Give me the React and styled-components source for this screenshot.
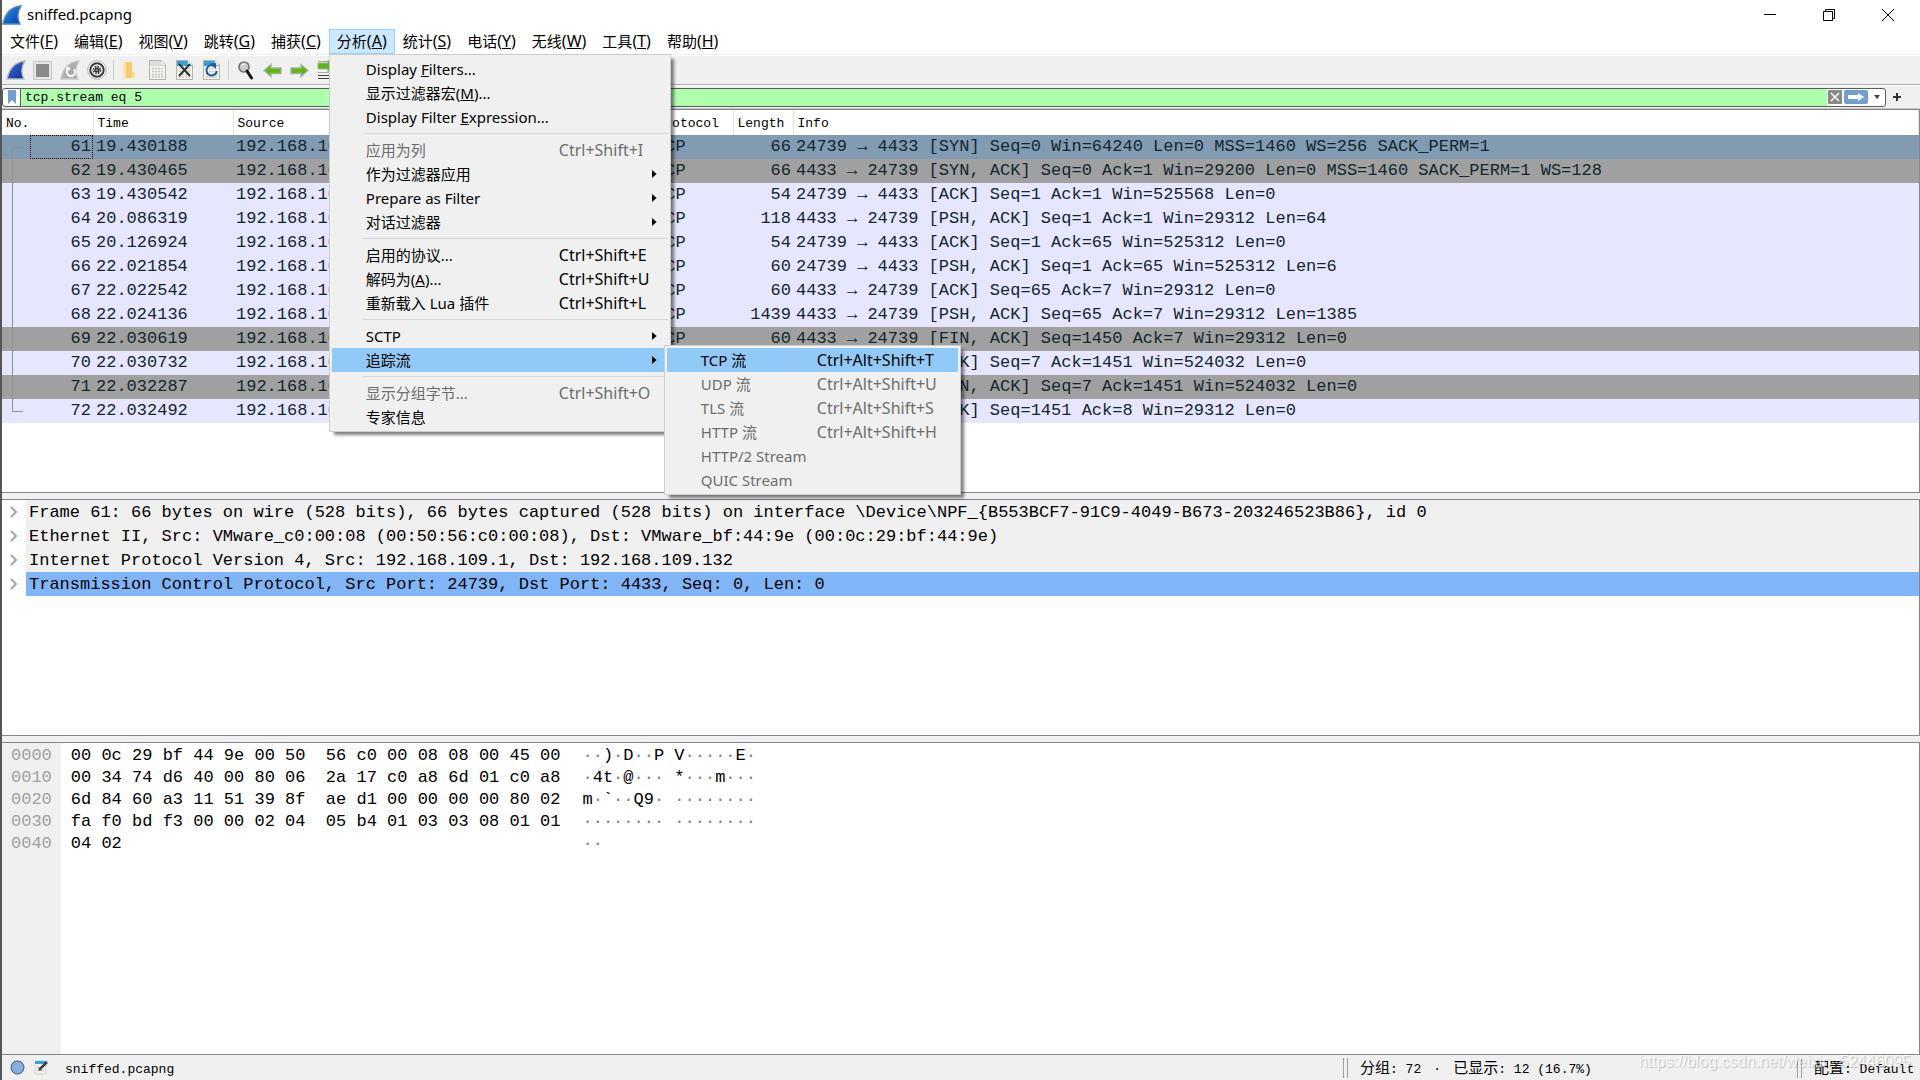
import React from 'react';
import styled, { createGlobalStyle, css } from 'styled-components';

const MONO = "'Liberation Mono', 'Noto Sans CJK SC', monospace";
const UI = "'Noto Sans', 'Noto Sans CJK SC', sans-serif";

const GlobalStyle = createGlobalStyle`
  * {
    box-sizing: border-box;
  }
  body {
    margin: 0;
    background: #fff;
    color: #000;
    font-family: ${UI};
    font-size: 15px;
  }
  button {
    margin: 0;
    padding: 0;
    border: 0;
    background: none;
    color: inherit;
    font: inherit;
  }
  ul {
    margin: 0;
    padding: 0;
    list-style: none;
  }
`;

const Window = styled.div`
  display: flex;
  flex-direction: column;
  height: 100vh;
  overflow: hidden;
  border-left: 2px solid #555;
  background: #f0f0f0;
`;

/* title bar */
const TitleBar = styled.header`
  display: flex;
  align-items: center;
  flex: none;
  height: 29px;
  padding-right: 3px;
  background: #fff;
`;
const Title = styled.h1`
  flex: 1;
  margin: 0 0 0 5px;
  font-size: 15px;
  font-weight: 400;
  line-height: 29px;
`;
const WindowButton = styled.button`
  display: grid;
  place-items: center;
  width: 59px;
  height: 29px;
`;

/* menus */
const MenuBar = styled.ul`
  display: flex;
  flex: none;
  height: 27px;
  padding-bottom: 2px;
  background: linear-gradient(#f0f0f0, #f0f0f0) 0 25px / 100% 1px no-repeat #fff;
`;
const MenuBarItem = styled.li`
  position: relative;
`;
const MenuBarButton = styled.button`
  height: 25px;
  padding: 0 7px;
  border: 1px solid ${p => (p.$open ? '#99d1ff' : 'transparent')};
  background: ${p => (p.$open ? '#cce8ff' : 'none')};
  line-height: 23px;
  white-space: nowrap;
`;
const Mnemonic = styled.span`
  font-size: 16px;
`;
const Menu = styled.ul`
  position: absolute;
  z-index: 2;
  width: ${p => p.$width}px;
  padding: 2px;
  border: 1px solid #ccc;
  background: #f0f0f0;
  box-shadow: 4px 4px 3px -1px rgba(0, 0, 0, 0.5);
  ${p =>
    p.$sub
      ? css`
          top: -3px;
          left: 332px;
        `
      : css`
          top: 25px;
          left: 0;
        `}
`;
const MenuRow = styled.li`
  position: relative;
`;
const MenuButton = styled.button`
  display: grid;
  grid-template-columns: ${p => (p.$sub ? '116px' : '193px')} 1fr 16px;
  align-items: center;
  width: 100%;
  height: 24px;
  padding-left: 34px;
  background: ${p => (p.$active ? '#91c9f7' : 'none')};
  color: ${p => (p.$muted ? '#6d6d6d' : '#000')};
  line-height: 24px;
  text-align: left;
  white-space: nowrap;
`;
const Shortcut = styled.span`
  font-size: 16px;
`;
const MenuSeparator = styled.li`
  height: 1px;
  margin: 4px 0 4px 30px;
  background: #d7d7d7;
`;

/* toolbar */
const ToolBar = styled.div`
  display: flex;
  align-items: center;
  flex: none;
  height: 29px;
  border-bottom: 1px solid #b0b0b0;
`;
const ToolButton = styled.button`
  display: grid;
  place-items: center;
  width: 27px;
  height: 28px;
`;
const ToolSeparator = styled.span`
  width: 1px;
  height: 20px;
  margin: 0 3px;
  background: #cfcfcf;
`;

/* display filter */
const FilterBar = styled.form`
  display: flex;
  align-items: center;
  flex: none;
  height: 24px;
  padding-right: 12px;
  border-top: 1px solid #fff;
  border-bottom: 1px solid #c3c3c6;
`;
const FilterBox = styled.div`
  display: flex;
  align-items: center;
  flex: 1;
  height: 19px;
  border: 1px solid #5b5b5b;
  border-radius: 3px;
  background: #fff;
`;
const BookmarkButton = styled.button`
  display: grid;
  place-items: center;
  width: 18px;
  height: 17px;
  border-right: 1px solid #5b5b5b;
`;
const FilterInput = styled.input`
  flex: 1;
  min-width: 0;
  height: 17px;
  padding: 1px 4px 0;
  border: 0;
  outline: 0;
  background: #afffaf;
  font: 13px/16px ${MONO};
`;
const FilterButton = styled.button`
  display: grid;
  place-items: center;
  width: ${p => p.$width}px;
  height: 17px;
`;

/* panes */
const Pane = styled.section`
  flex: ${p => p.$grow} 1 0;
  min-height: 0;
  overflow: hidden;
  border: 1px solid #828790;
  border-left: 0;
  background: #fff;
`;
const Splitter = styled.div`
  flex: none;
  height: 6px;
`;

const PacketPane = styled(Pane)`
  position: relative;
`;
const PacketTable = styled.table`
  width: 100%;
  border-collapse: collapse;
  table-layout: fixed;
`;
const HeadCell = styled.th`
  height: 25px;
  padding: 2px 4px 0;
  border-right: 1px solid #e5e5e5;
  font: 13px/23px ${MONO};
  text-align: left;
`;
const rowColors = {
  selected: '#819bb3',
  gray: '#a0a0a0',
  tcp: '#e7e6ff'
};
const PacketRow = styled.tr`
  background: ${p => rowColors[p.$kind]};
`;
const Cell = styled.td`
  height: 24px;
  padding: 0 2px 0 3px;
  overflow: hidden;
  color: #12272e;
  font: 17px/24px ${MONO};
  text-align: ${p => (p.$right ? 'right' : 'left')};
  white-space: pre;
`;
const FocusBox = styled.span`
  display: block;
  height: 24px;
  margin: 0 -2px 0 25px;
  padding-right: 2px;
  outline: ${p => (p.$on ? '1px dotted #000' : '0')};
  outline-offset: -1px;
`;
const Bracket = styled.svg`
  position: absolute;
  top: 37px;
  left: 9px;
`;

const TreeItem = styled.li`
  display: flex;
  height: 24px;
  font: 17px/26px ${MONO};
  white-space: pre;
`;
const TreeToggle = styled.button`
  display: grid;
  place-items: center;
  width: 24px;
  height: 24px;
`;
const TreeText = styled.span`
  flex: 1;
  padding-left: 3px;
  background: ${p => (p.$selected ? '#80b5f8' : '#f0f0f0')};
`;

const HexPane = styled(Pane)`
  display: flex;
  font: 17px/22px ${MONO};
`;
const HexColumn = styled.pre`
  margin: 0;
  padding: ${p => (p.$offset ? '2px 9px 0' : '2px 12px 0 10px')};
  background: ${p => (p.$offset ? '#f0f0f0' : '#fff')};
  color: ${p => (p.$offset ? '#a0a0a0' : '#000')};
  font: inherit;
`;
const Dot = styled.span`
  color: #808080;
`;

/* status bar */
const StatusBar = styled.footer`
  position: relative;
  display: flex;
  align-items: center;
  flex: none;
  height: 25px;
  padding: 4px 4px 0 3px;
  font: 13px/20px ${MONO};
  white-space: pre;
`;
const StatusButton = styled.button`
  display: grid;
  place-items: center;
  width: 24px;
  height: 20px;
  margin-top: -4px;
`;
const StatusFile = styled.span`
  flex: 1;
  padding-left: 12px;
`;
const StatusCell = styled.span`
  width: ${p => p.$width}px;
  padding-left: 12px;
`;
const Grip = styled.span`
  width: 5px;
  height: 20px;
  margin-top: -4px;
  border: solid #a0a0a0;
  border-width: 0 1px;
`;
const Cjk = styled.span`
  font-size: 15px;
`;
const Middot = styled.span`
  display: inline-block;
  width: 32px;
  text-align: center;
`;
const Watermark = styled.span`
  position: absolute;
  right: 9px;
  bottom: 8px;
  color: rgba(255, 255, 255, 0.75);
  font: 16px/20px 'Liberation Sans', sans-serif;
  text-shadow: 1px 1px 1px rgba(0, 0, 0, 0.2);
`;

function Fin({ size = 20, from = '#3f6fd6', to = '#10309a', edge = '#bdbdbd', children }) {
  const id = `fin${from.slice(1)}`;
  return (
    <svg width={size} height={size} viewBox="0 0 20 20">
      <defs>
        <linearGradient id={id} x1="0" y1="0" x2="1" y2="1">
          <stop offset="0" stopColor={from} />
          <stop offset="1" stopColor={to} />
        </linearGradient>
      </defs>
      <path
        d="M1 19C3 9 8 2 19 1C15 7 15 13 18 19Z"
        fill={`url(#${id})`}
        stroke={edge}
        strokeWidth="1.4"
      />
      {children}
    </svg>
  );
}

function FileIcon({ muted, children }) {
  return (
    <svg width="17" height="20" viewBox="0 0 17 20">
      <path d="M.5.5H12L16.500 5V19.500H.5Z" fill="#f4f4ee" stroke="#b5b5ae" />
      <path d="M1 1H12V5H16V6H1Z" fill={muted ? '#dedede' : '#38a0d8'} />
      <path d="M12 .5V5H16.500Z" fill="#fff" stroke="#c5c5c5" strokeWidth=".6" />
      <path
        d="M3 8.500H14M3 11.500H14M3 14.500H14M3 17H14"
        stroke={muted ? '#c4c4c4' : '#cfcfc5'}
        strokeWidth="1.500"
        strokeDasharray="2 1"
      />
      {children}
    </svg>
  );
}

function GreenArrow({ flip }) {
  return (
    <svg width="19" height="15" viewBox="0 0 19 15">
      <path
        transform={flip ? 'translate(19 0) scale(-1 1)' : undefined}
        d="M1 7.500L8 1.500V5H18V10.500H8V13.500Z"
        fill="#5cb512"
        stroke="#a5b59b"
        strokeWidth="1.300"
      />
    </svg>
  );
}

const tools = [
  ['Start capture', <Fin />],
  [
    'Stop capture',
    <svg width="19" height="19" viewBox="0 0 19 19">
      <path d="M.5.5H18.500V18.500H.5Z" fill="#e6e6e6" stroke="#c6c6c6" />
      <path d="M3 3H16V16H3Z" fill="#8a8a8a" />
    </svg>
  ],
  [
    'Restart capture',
    <Fin from="#b8b8b8" to="#a2a2a2" edge="#c9c9c9">
      <path d="M8 9.500A4 4 0 1 0 14 9.500" fill="none" stroke="#fff" strokeWidth="2" />
      <path d="M6 11L7 6L11 9Z" fill="#fff" />
    </Fin>
  ],
  [
    'Capture options',
    <svg width="20" height="20" viewBox="0 0 20 20">
      <circle cx="10" cy="10" r="9.300" fill="#fff" stroke="#b0b0b0" />
      <circle cx="10" cy="10" r="6.700" fill="#f2f2f2" stroke="#3a3a3a" strokeWidth="2" />
      <circle cx="10" cy="10" r="3.400" fill="none" stroke="#3a3a3a" strokeWidth="1.800" strokeDasharray="1.600 1.070" />
      <circle cx="10" cy="10" r="2.500" fill="#3a3a3a" />
      <circle cx="10" cy="10" r="1" fill="#999" />
    </svg>
  ],
  null,
  [
    'Open',
    <svg width="17" height="19" viewBox="0 0 17 19">
      <path d="M1 1H10V12L12.500 13V17H4L1 18Z" fill="#f5cd6d" />
      <path d="M1 1L4 2V18L1 17Z" fill="#ffe8a6" />
      <path d="M10 11H12.500V17H10Z" fill="#fbdc8a" />
    </svg>
  ],
  ['Save', <FileIcon muted />],
  [
    'Close',
    <FileIcon>
      <path d="M3 4L14 16M14 4L3 16" stroke="#2b3438" strokeWidth="2" />
    </FileIcon>
  ],
  [
    'Reload',
    <FileIcon>
      <path d="M11.500 6A5.200 5.200 0 1 0 13.800 11" fill="none" stroke="#235a9d" strokeWidth="2" />
      <path d="M7 3.500L13 3V9Z" fill="#235a9d" />
    </FileIcon>
  ],
  null,
  [
    'Find',
    <svg width="18" height="20" viewBox="0 0 18 20">
      <circle cx="7" cy="7" r="5" fill="#c8cdd0" stroke="#777" strokeWidth="1.700" />
      <path d="M4 6Q5 4 8 4" stroke="#fff" fill="none" />
      <path d="M10 11L14.500 18" stroke="#151515" strokeWidth="3" strokeLinecap="round" />
    </svg>
  ],
  ['Previous packet', <GreenArrow />],
  ['Next packet', <GreenArrow flip />],
  [
    'Go to packet',
    <svg width="20" height="20" viewBox="0 0 20 20">
      <path d="M1 1.500H19M1 4.500H19M1 12.500H19" stroke="#aaa" />
      <path d="M1 15.500H19M1 18.500H19" stroke="#444" />
      <path d="M1 3H11V0L18 6L11 12V9H1Z" fill="#5cb512" stroke="#a5b59b" />
    </svg>
  ]
];

// the letter after "&" is the mnemonic
const menuTitles = [
  ['文件', 'F'],
  ['编辑', 'E'],
  ['视图', 'V'],
  ['跳转', 'G'],
  ['捕获', 'C'],
  ['分析', 'A'],
  ['统计', 'S'],
  ['电话', 'Y'],
  ['无线', 'W'],
  ['工具', 'T'],
  ['帮助', 'H']
];

const streams = [
  { label: 'TCP 流', keys: 'Ctrl+Alt+Shift+T', active: true },
  { label: 'UDP 流', keys: 'Ctrl+Alt+Shift+U', muted: true },
  { label: 'TLS 流', keys: 'Ctrl+Alt+Shift+S', muted: true },
  { label: 'HTTP 流', keys: 'Ctrl+Alt+Shift+H', muted: true },
  { label: 'HTTP/2 Stream', muted: true },
  { label: 'QUIC Stream', muted: true }
];

const analyze = [
  { label: 'Display &Filters...' },
  { label: '显示过滤器宏(&M)...' },
  { label: 'Display Filter &Expression...' },
  null,
  { label: '应用为列', keys: 'Ctrl+Shift+I', muted: true },
  { label: '作为过滤器应用', arrow: true },
  { label: 'Prepare as Filter', arrow: true },
  { label: '对话过滤器', arrow: true },
  null,
  { label: '启用的协议...', keys: 'Ctrl+Shift+E' },
  { label: '解码为(&A)...', keys: 'Ctrl+Shift+U' },
  { label: '重新载入 Lua 插件', keys: 'Ctrl+Shift+L' },
  null,
  { label: 'SCTP', arrow: true },
  { label: '追踪流', arrow: true, active: true, items: streams },
  null,
  { label: '显示分组字节...', keys: 'Ctrl+Shift+O', muted: true },
  { label: '专家信息' }
];

const A = '192.168.109.1';
const B = '192.168.109.132';
const packets = [
  [61, '19.430188', A, B, 66, '24739 → 4433 [SYN] Seq=0 Win=64240 Len=0 MSS=1460 WS=256 SACK_PERM=1', 'selected'],
  [62, '19.430465', B, A, 66, '4433 → 24739 [SYN, ACK] Seq=0 Ack=1 Win=29200 Len=0 MSS=1460 SACK_PERM=1 WS=128', 'gray'],
  [63, '19.430542', A, B, 54, '24739 → 4433 [ACK] Seq=1 Ack=1 Win=525568 Len=0', 'tcp'],
  [64, '20.086319', B, A, 118, '4433 → 24739 [PSH, ACK] Seq=1 Ack=1 Win=29312 Len=64', 'tcp'],
  [65, '20.126924', A, B, 54, '24739 → 4433 [ACK] Seq=1 Ack=65 Win=525312 Len=0', 'tcp'],
  [66, '22.021854', A, B, 60, '24739 → 4433 [PSH, ACK] Seq=1 Ack=65 Win=525312 Len=6', 'tcp'],
  [67, '22.022542', B, A, 60, '4433 → 24739 [ACK] Seq=65 Ack=7 Win=29312 Len=0', 'tcp'],
  [68, '22.024136', B, A, 1439, '4433 → 24739 [PSH, ACK] Seq=65 Ack=7 Win=29312 Len=1385', 'tcp'],
  [69, '22.030619', B, A, 60, '4433 → 24739 [FIN, ACK] Seq=1450 Ack=7 Win=29312 Len=0', 'gray'],
  [70, '22.030732', A, B, 54, '24739 → 4433 [ACK] Seq=7 Ack=1451 Win=524032 Len=0', 'tcp'],
  [71, '22.032287', A, B, 54, '24739 → 4433 [FIN, ACK] Seq=7 Ack=1451 Win=524032 Len=0', 'gray'],
  [72, '22.032492', B, A, 60, '4433 → 24739 [ACK] Seq=1451 Ack=8 Win=29312 Len=0', 'tcp']
];

const details = [
  'Frame 61: 66 bytes on wire (528 bits), 66 bytes captured (528 bits) on interface \\Device\\NPF_{B553BCF7-91C9-4049-B673-203246523B86}, id 0',
  'Ethernet II, Src: VMware_c0:00:08 (00:50:56:c0:00:08), Dst: VMware_bf:44:9e (00:0c:29:bf:44:9e)',
  'Internet Protocol Version 4, Src: 192.168.109.1, Dst: 192.168.109.132',
  'Transmission Control Protocol, Src Port: 24739, Dst Port: 4433, Seq: 0, Len: 0'
];

const hex = [
  ['0000', '00 0c 29 bf 44 9e 00 50  56 c0 00 08 08 00 45 00', '··)·D··P V·····E·'],
  ['0010', '00 34 74 d6 40 00 80 06  2a 17 c0 a8 6d 01 c0 a8', '·4t·@··· *···m···'],
  ['0020', '6d 84 60 a3 11 51 39 8f  ae d1 00 00 00 00 80 02', 'm·`··Q9· ········'],
  ['0030', 'fa f0 bd f3 00 00 02 04  05 b4 01 03 03 08 01 01', '········ ········'],
  ['0040', '04 02', '··']
];

function Label({ text }) {
  const [before, rest] = text.split('&');
  if (!rest) return <span>{before}</span>;
  return (
    <span>
      {before}
      <u>{rest[0]}</u>
      {rest.slice(1)}
    </span>
  );
}

function MenuList({ items, sub, width }) {
  return (
    <Menu $sub={sub} $width={width}>
      {items.map((item, i) =>
        item ? (
          <MenuRow key={item.label}>
            <MenuButton type="button" $sub={sub} $active={item.active} $muted={item.muted}>
              <Label text={item.label} />
              <Shortcut>{item.keys}</Shortcut>
              {item.arrow && (
                <svg width="5" height="8" viewBox="0 0 5 8">
                  <path d="M0 0L4.500 4L0 8Z" />
                </svg>
              )}
            </MenuButton>
            {item.items && <MenuList items={item.items} sub width={297} />}
          </MenuRow>
        ) : (
          <MenuSeparator key={i} />
        )
      )}
    </Menu>
  );
}

export default function App() {
  return (
    <Window>
      <GlobalStyle />
      <TitleBar>
        <Fin size={20} from="#2a8be8" to="#0a3fa8" edge="#4d86c8" />
        <Title>sniffed.pcapng</Title>
        <WindowButton type="button" aria-label="Minimize">
          <svg width="12" height="12">
            <path d="M0 5.500H12" stroke="#000" />
          </svg>
        </WindowButton>
        <WindowButton type="button" aria-label="Restore">
          <svg width="12" height="12" fill="none" stroke="#000">
            <path d="M.5 2.500H9.500V11.500H.5ZM2.500 2.500V.5H11.500V9.500H9.500" />
          </svg>
        </WindowButton>
        <WindowButton type="button" aria-label="Close window">
          <svg width="12" height="12" stroke="#000">
            <path d="M0 0L12 12M12 0L0 12" />
          </svg>
        </WindowButton>
      </TitleBar>

      <MenuBar>
        {menuTitles.map(([name, letter]) => {
          const open = name === '分析';
          return (
            <MenuBarItem key={name}>
              <MenuBarButton type="button" $open={open}>
                {name}
                <Mnemonic>
                  (<u>{letter}</u>)
                </Mnemonic>
              </MenuBarButton>
              {open && <MenuList items={analyze} width={342} />}
            </MenuBarItem>
          );
        })}
      </MenuBar>

      <ToolBar>
        {tools.map((tool, i) =>
          tool ? (
            <ToolButton key={tool[0]} type="button" aria-label={tool[0]}>
              {tool[1]}
            </ToolButton>
          ) : (
            <ToolSeparator key={i} />
          )
        )}
      </ToolBar>

      <FilterBar onSubmit={e => e.preventDefault()}>
        <FilterBox>
          <BookmarkButton type="button" aria-label="Bookmarks">
            <svg width="8" height="14">
              <path d="M0 0H8V14L4 10L0 14Z" fill="#729fcf" />
            </svg>
          </BookmarkButton>
          <FilterInput aria-label="Display filter" defaultValue="tcp.stream eq 5" spellCheck={false} />
          <FilterButton type="button" aria-label="Clear" $width={16}>
            <svg width="14" height="14">
              <rect width="14" height="14" rx="1" fill="#888a85" />
              <path d="M3 3L11 11M11 3L3 11" stroke="#fff" strokeWidth="1.500" />
            </svg>
          </FilterButton>
          <FilterButton type="submit" aria-label="Apply" $width={26}>
            <svg width="24" height="14">
              <rect width="24" height="14" rx="2" fill="#729fcf" />
              <path d="M4 5H14V3L20 7L14 11V9H4Z" fill="#fff" />
            </svg>
          </FilterButton>
          <FilterButton type="button" aria-label="Recent filters" $width={16}>
            <svg width="6" height="4">
              <path d="M0 0H6L3 4Z" fill="#444" />
            </svg>
          </FilterButton>
        </FilterBox>
        <FilterButton type="button" aria-label="Add filter button" $width={22}>
          <svg width="8" height="8">
            <path d="M4 0V8M0 4H8" stroke="#333" strokeWidth="2" />
          </svg>
        </FilterButton>
      </FilterBar>

      <PacketPane $grow={384}>
        <PacketTable>
          <colgroup>
            <col width="91" />
            <col width="140" />
            <col width="209" />
            <col width="210" />
            <col width="81" />
            <col width="60" />
            <col />
          </colgroup>
          <thead>
            <tr>
              {['No.', 'Time', 'Source', 'Destination', 'Protocol', 'Length', 'Info'].map(name => (
                <HeadCell key={name}>{name}</HeadCell>
              ))}
            </tr>
          </thead>
          <tbody>
            {packets.map(([no, time, src, dst, length, info, kind]) => (
              <PacketRow key={no} $kind={kind}>
                <Cell $right>
                  <FocusBox $on={kind === 'selected'}>{no}</FocusBox>
                </Cell>
                <Cell>{time}</Cell>
                <Cell>{src}</Cell>
                <Cell>{dst}</Cell>
                <Cell>TCP</Cell>
                <Cell $right>{length}</Cell>
                <Cell>{info}</Cell>
              </PacketRow>
            ))}
          </tbody>
        </PacketTable>
        <Bracket width="12" height="266" fill="none" stroke="#8a9297">
          <path d="M12 .5H1.500V264.500H12" />
        </Bracket>
      </PacketPane>
      <Splitter />

      <Pane $grow={237}>
        <ul>
          {details.map((text, i) => (
            <TreeItem key={text}>
              <TreeToggle type="button" aria-label="Expand">
                <svg width="8" height="12" fill="none" stroke="#a6a6a6" strokeWidth="2">
                  <path d="M1 1L6 6L1 11" />
                </svg>
              </TreeToggle>
              <TreeText $selected={i === 3}>{text}</TreeText>
            </TreeItem>
          ))}
        </ul>
      </Pane>
      <Splitter />

      <HexPane $grow={313}>
        <HexColumn $offset>{hex.map(row => row[0]).join('\n')}</HexColumn>
        <HexColumn>{hex.map(row => row[1]).join('\n')}</HexColumn>
        <HexColumn>
          {hex
            .map(row => row[2])
            .join('\n')
            .split(/(·+)/)
            .map((part, i) => (i % 2 ? <Dot key={i}>{part}</Dot> : part))}
        </HexColumn>
      </HexPane>

      <StatusBar>
        <StatusButton type="button" aria-label="Expert information">
          <svg width="15" height="15">
            <circle cx="7.500" cy="7.500" r="6.500" fill="#86aee0" stroke="#3f5878" />
          </svg>
        </StatusButton>
        <StatusButton type="button" aria-label="Capture comment">
          <svg width="15" height="15">
            <path d="M1 1H12V14H1Z" fill="#f2f2ea" stroke="#d0d0c8" />
            <path d="M1 1H12V4H1Z" fill="#38a0d8" />
            <path d="M3 7.500H8M3 10.500H10" stroke="#bbb" />
            <path d="M5 10L13 2" stroke="#3c4245" strokeWidth="2.500" />
          </svg>
        </StatusButton>
        <StatusFile>sniffed.pcapng</StatusFile>
        <Grip />
        <StatusCell $width={449}>
          <Cjk>分组</Cjk>: 72<Middot>·</Middot><Cjk>已显示</Cjk>: 12 (16.7%)
        </StatusCell>
        <Grip />
        <StatusCell $width={114}>
          <Cjk>配置</Cjk>: Default
        </StatusCell>
        <Watermark>https://blog.csdn.net/weixin_52446095</Watermark>
      </StatusBar>
    </Window>
  );
}
